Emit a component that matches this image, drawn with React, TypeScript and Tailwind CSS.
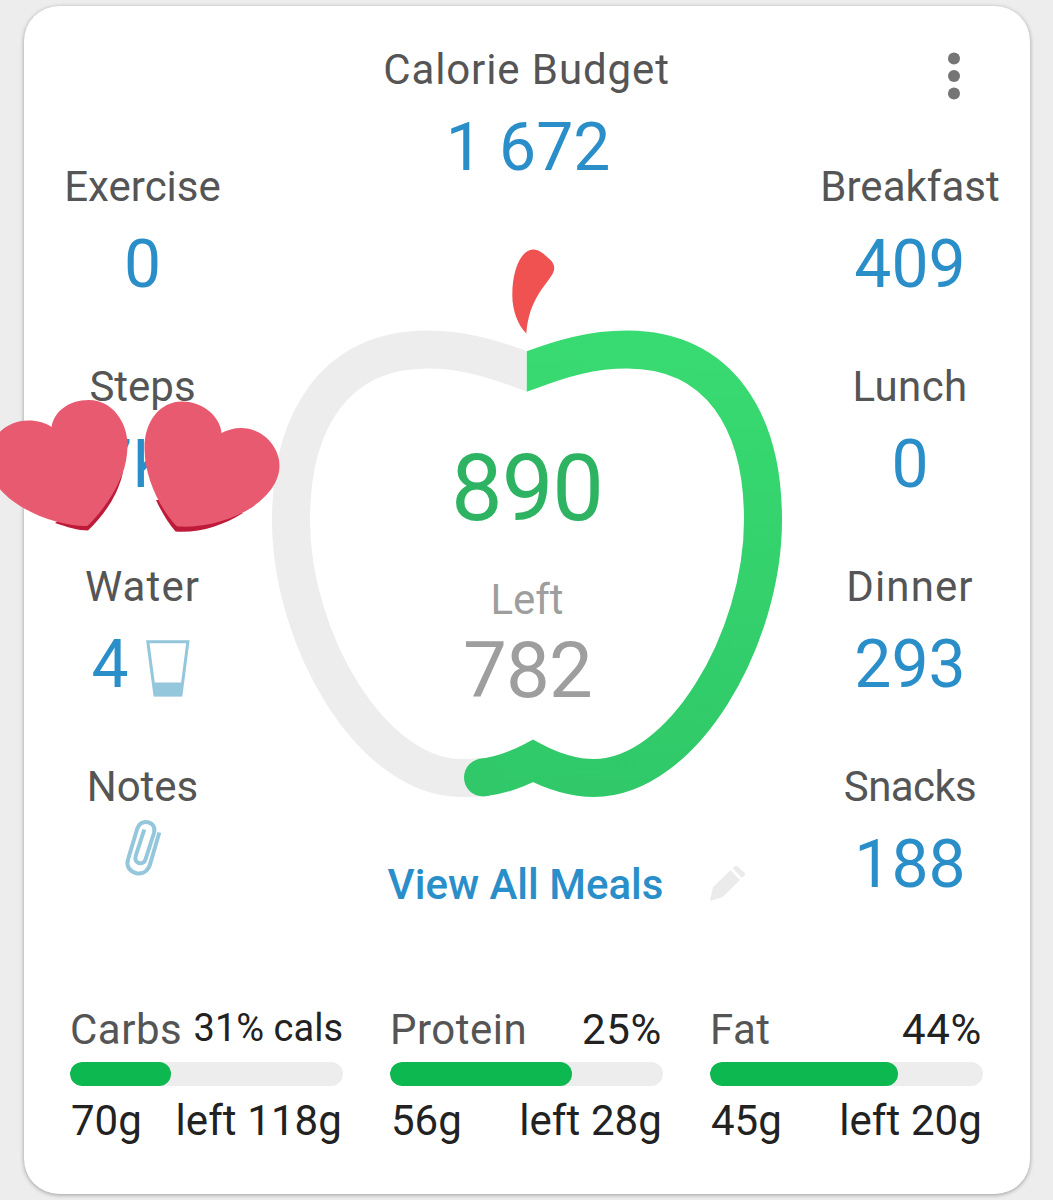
import React from "react";

type StatProps = { label: string; labelClass?: string; children: React.ReactNode };

function Stat({ label, labelClass = "", children }: StatProps) {
  return (
    <div className="flex h-[200px] flex-col items-center">
      <div className={`h-[50px] text-[42px] leading-[50px] whitespace-nowrap text-[#555555] ${labelClass}`}>{label}</div>
      <div className="mt-[13px] flex h-[80px] items-center text-[66px] leading-[80px] whitespace-nowrap text-[#2a8ec9]">
        {children}
      </div>
    </div>
  );
}

function Glass() {
  return (
    <svg className="mt-[6px] mr-[4px] ml-[17px] h-[57px] w-[44px]" viewBox="146 639.5 44 57" fill="none">
      <path d="M147.8 641.2H187.9L181 694.5H154.9Z" stroke="#94c6dc" strokeWidth="3" />
      <path d="M153.4 682H182.6L181.4 695.8H154.6Z" fill="#94c6dc" />
    </svg>
  );
}

function Paperclip() {
  return (
    <svg className="-mt-[34px] h-[58px] w-[40px]" viewBox="123 819 40 58" fill="none" stroke="#94c6dc" strokeWidth="4">
      <path d="M159.3 832.5L150 864.5C147.8 871 142.500 874.500 136.500 873.200C129.500 871.500 125.900 866 128 859.500L137 829.500C138.800 823.500 143 821 148 822.200C153 823.500 155.500 827.500 154 833L145.800 858.500C144.600 862.500 142.200 863.800 139.300 863.200C136 862.300 134.700 859.600 135.700 856L144.300 829.500" />
    </svg>
  );
}

function Apple() {
  return (
    <svg className="col-start-1 row-start-1 h-[560px] w-[530px]" viewBox="262 240 530 560" fill="none">
      <defs>
        <linearGradient id="ring" gradientUnits="userSpaceOnUse" x1="560" y1="330" x2="540" y2="800">
          <stop offset="0" stopColor="#38db71" />
          <stop offset="1" stopColor="#30c869" />
        </linearGradient>
        <clipPath id="leftSide">
          <rect x="262" y="240" width="264" height="560" />
        </clipPath>
        <clipPath id="rightSide">
          <path d="M526.700 240H792V800H440V600H526.700Z" />
        </clipPath>
      </defs>
      <path
        clipPath="url(#leftSide)"
        d="M541 376.500L527 371.500C492 358 462 349.500 427 349.500C334 349.500 291 422 291 520C291 640 372 778 461 778C470 778 478 778 486 776"
        stroke="#ededed"
        strokeWidth="38"
      />
      <g clipPath="url(#rightSide)" stroke="url(#ring)" strokeWidth="38">
        <path d="M513 376.500L527 371.500C562 358 592 349.500 627 349.500C720 349.500 763 422 763 520C763 640 682 778 594 778C572 778 553 771.500 533 761C515 770.500 500 775.500 483 777.500" />
      </g>
      <circle cx="483" cy="777.500" r="19" fill="#30c869" />
      <path
        d="M526.300 333.500C518 325 512.300 311 512.300 295C512.300 268 522 249.500 533 249.500C536.500 249.500 540 251 543.500 253.800L550 259.500C554.500 263.800 555.300 268.500 553 273C547 285 529 298 526.300 333.500Z"
        fill="#f05252"
      />
    </svg>
  );
}

function Hearts() {
  return (
    <svg className="absolute top-[395px] left-0 h-[142px] w-[285px]" viewBox="0 395 285 142" fill="none">
      <path d="M55 523C67 527 78 530.500 88 530.500C103 516 118 496 123 472L85 500Z" fill="#be1b3a" />
      <path
        d="M85.500 526C50 526 -12 500 -12 460C-12 438 6 420.500 28 420.500C38 420.500 46 423 51.500 427C54 412 68 400 89 400C112 400 127.500 422 127.500 445C127.500 455 125.500 466 122 475C112 499 99 514 89 524.500Q87.500 526 85.500 526Z"
        fill="#e75a70"
      />
      <path d="M156 500C161 511 168 523 175.500 531.500C200 533 222 526 243 513L190 500Z" fill="#be1b3a" />
      <path
        d="M179 526.500Q177 526.500 175.500 525C160 508 144.500 478 144.500 448C144.500 420 161 401.500 182 401.500C205 401.500 221 419 221.500 433C227 430 234 428 241 428C262 428 279.500 446 279.500 466C279.500 484 264 501 245 511.500C222 523.500 198 527.500 179 526.500Z"
        fill="#e75a70"
      />
    </svg>
  );
}

type MacroProps = { name: string; percent: string; small?: boolean; fill: string; eaten: string; left: string };

function Macro({ name, percent, small, fill, eaten, left }: MacroProps) {
  return (
    <div className="w-[273px] whitespace-nowrap">
      <div className="flex h-[50px] items-center justify-between text-[42px] leading-[50px]">
        <span className="tracking-[0.5px] text-[#555555]">{name}</span>
        <span className={small ? "-mt-[5px] text-[38px] text-[#222222]" : "mr-px tracking-[0.7px] text-[#222222]"}>
          {percent}
        </span>
      </div>
      <div className="mt-[7px] h-[24px] overflow-hidden rounded-full bg-[#ededed]">
        <div className={`h-full rounded-full bg-[#0cb84f] ${fill}`} />
      </div>
      <div className="mt-[10px] flex h-[50px] items-center justify-between pr-px pl-px text-[42px] leading-[50px] text-[#222222]">
        <span>{eaten}</span>
        <span className="tracking-[0.1px]">{left}</span>
      </div>
    </div>
  );
}

export default function App() {
  return (
    <div className="relative h-[1200px] w-[1053px] overflow-hidden bg-[#ededed] px-[23.5px] pt-[5.5px] font-['Roboto',sans-serif]">
      <main className="h-[1188.5px] w-[1006px] rounded-[35px] bg-white pt-[0.5px] shadow-[0_1px_4px_rgba(0,0,0,0.35)]">
        <div className="flex h-[996px]">
          <section className="w-[238px] pt-[156px]">
            <Stat label="Exercise">0</Stat>
            <Stat label="Steps">
              <span className="-ml-[16px]">7K</span>
            </Stat>
            <Stat label="Water" labelClass="tracking-[1.1px]">
              4<Glass />
            </Stat>
            <Stat label="Notes">
              <Paperclip />
            </Stat>
          </section>

          <section className="flex w-[530px] flex-col items-center pt-[39px]">
            <h1 className="h-[50px] text-[42px] leading-[50px] tracking-[0.9px] text-[#555555]">Calorie Budget</h1>
            <div className="mt-[13px] h-[80px] pl-[3px] text-[66px] leading-[80px] text-[#2a8ec9]">1 672</div>
            <div className="mt-[52px] ml-px grid h-[560px] w-[530px]">
              <Apple />
              <div className="col-start-1 row-start-1 flex flex-col items-center pt-[199px]">
                <div className="h-[100px] text-[92px] leading-[100px] tracking-[-1px] text-[#2eb363]">890</div>
                <div className="mt-[36px] h-[50px] text-[42px] leading-[50px] text-[#9e9e9e]">Left</div>
                <div className="mt-px h-[90px] pl-px text-[78px] leading-[90px] tracking-[-0.8px] text-[#9e9e9e]">782</div>
              </div>
            </div>
            <div className="mt-[60px] flex h-[50px] items-center pl-[81px]">
              <a className="text-[42px] leading-[50px] font-medium whitespace-nowrap text-[#2a8ec9]">View All Meals</a>
              <svg className="-mt-[3px] ml-[46px] h-[37px] w-[37px]" viewBox="710 865 37 37" fill="#ebebeb">
                <path d="M711 901L713.500 889Q713.800 887.500 715 886.300L731.500 870L741 880L725 895.800Q723.800 897 722.300 897.400Z" />
                <path d="M733.500 868L736 866.300Q737.500 865.500 739 866.700L745.500 872.800Q746.500 874 745.500 875.500L742.800 878Z" />
              </svg>
            </div>
          </section>

          <section className="relative w-[238px] pt-[156px] pr-px">
            <svg className="absolute top-[44px] right-[68px] h-[52px] w-[16px]" viewBox="0 0 16 52" fill="#757575">
              <circle cx="8" cy="8.500" r="6" />
              <circle cx="8" cy="26" r="6" />
              <circle cx="8" cy="43.500" r="6" />
            </svg>
            <Stat label="Breakfast">409</Stat>
            <Stat label="Lunch" labelClass="tracking-[0.4px]">
              0
            </Stat>
            <Stat label="Dinner" labelClass="tracking-[1.1px]">
              293
            </Stat>
            <Stat label="Snacks" labelClass="tracking-[-0.6px]">
              188
            </Stat>
          </section>
        </div>

        <div className="flex gap-[47px] pt-[3px] pl-[46.5px]">
          <Macro name="Carbs" percent="31% cals" small fill="w-[101px]" eaten="70g" left="left 118g" />
          <Macro name="Protein" percent="25%" fill="w-[182px]" eaten="56g" left="left 28g" />
          <Macro name="Fat" percent="44%" fill="w-[188px]" eaten="45g" left="left 20g" />
        </div>
      </main>
      <Hearts />
    </div>
  );
}
